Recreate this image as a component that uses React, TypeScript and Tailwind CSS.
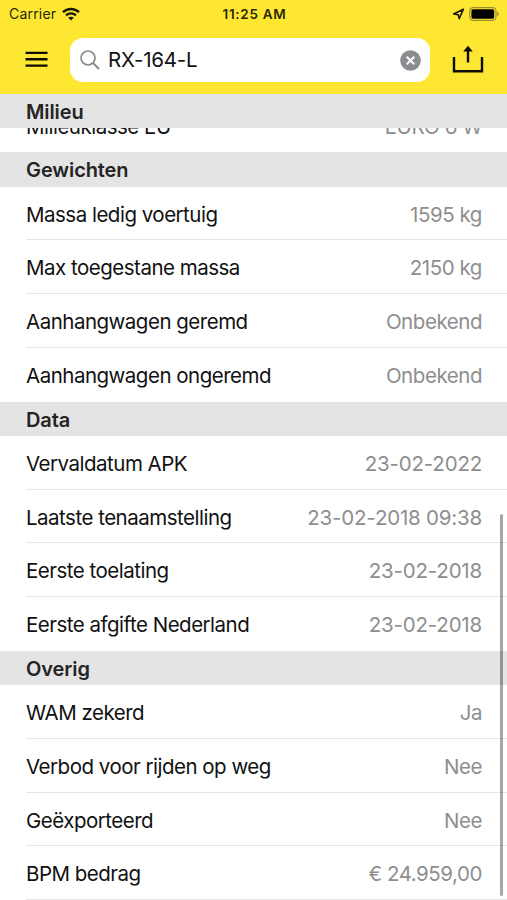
type Item = {
  label: string;
  value: string;
};

type Section = {
  title: string;
  items: Item[];
};

const sections: Section[] = [
  {
    title: "Gewichten",
    items: [
      { label: "Massa ledig voertuig", value: "1595 kg" },
      { label: "Max toegestane massa", value: "2150 kg" },
      { label: "Aanhangwagen geremd", value: "Onbekend" },
      { label: "Aanhangwagen ongeremd", value: "Onbekend" },
    ],
  },
  {
    title: "Data",
    items: [
      { label: "Vervaldatum APK", value: "23-02-2022" },
      { label: "Laatste tenaamstelling", value: "23-02-2018 09:38" },
      { label: "Eerste toelating", value: "23-02-2018" },
      { label: "Eerste afgifte Nederland", value: "23-02-2018" },
    ],
  },
  {
    title: "Overig",
    items: [
      { label: "WAM zekerd", value: "Ja" },
      { label: "Verbod voor rijden op weg", value: "Nee" },
      { label: "Geëxporteerd", value: "Nee" },
      { label: "BPM bedrag", value: "€ 24.959,00" },
    ],
  },
];

const StatusBar = () => {
  return (
    <div className="grid h-[27px] grid-cols-3 items-center pl-[9px] pr-[7px] text-[#2b2704]">
      <div className="flex items-center gap-[6px]">
        <span className="text-[14px] tracking-[0.2px]">Carrier</span>
        <svg width="18" height="14" viewBox="0 0 18 14" fill="none" stroke="#1c1a04">
          <path d="M1 5.1C5.5 0.8 12.5 0.8 17 5.1" strokeWidth="2.5" />
          <path d="M4 8.4C6.8 5.8 11.2 5.8 14 8.4" strokeWidth="2.3" />
          <path d="M9 13.6 6.2 10.8C7.8 9.4 10.2 9.4 11.8 10.8Z" fill="#1c1a04" stroke="none" />
        </svg>
      </div>
      <span className="pt-[1px] text-center text-[13.5px] font-semibold tracking-[0.7px]">11:25 AM</span>
      <div className="flex items-center justify-end gap-[4px]">
        <svg width="13" height="12" viewBox="0 0 13 12" fill="none" stroke="#1c1a04" strokeWidth="1.6" strokeLinejoin="round">
          <path d="M11.4 1.2 1.6 6 6.2 6.6 7.2 10.6Z" />
        </svg>
        <svg width="31" height="14" viewBox="0 0 31 14">
          <rect x="0.7" y="0.7" width="26.3" height="12.6" rx="3.6" fill="none" stroke="#9a8e2a" strokeWidth="1.2" />
          <rect x="2.4" y="2.3" width="22.8" height="9.4" rx="1.8" fill="#000" />
          <path d="M28.2 4.8C30.3 5.2 30.3 8.8 28.2 9.2Z" fill="#9a8e2a" />
        </svg>
      </div>
    </div>
  );
};

const SearchBar = () => {
  return (
    <div className="flex items-start pt-[11px]">
      <button className="ml-[25px] mt-[13px]">
        <svg width="23" height="17" viewBox="0 0 23 17" stroke="#0d0c02" strokeWidth="2.4">
          <path d="M0.5 1.9H22.5M0.5 8.3H22.5M0.5 14.6H22.5" />
        </svg>
      </button>
      <div className="ml-[22px] flex h-[44px] w-[360px] items-center rounded-[13px] bg-white pl-[10px] pr-[9px]">
        <svg width="20" height="20" viewBox="0 0 20 20" fill="none" stroke="#8a8a8e" strokeWidth="1.7">
          <circle cx="8" cy="8" r="7" />
          <path d="M13 13 19 19" strokeWidth="2" />
        </svg>
        <span className="ml-[8px] flex-1 pt-[1px] text-[20.5px] tracking-[-0.25px] text-[#111]">RX-164-L</span>
        <svg width="21" height="21" viewBox="0 0 21 21">
          <circle cx="10.5" cy="10.5" r="10.3" fill="#8b8b90" />
          <path d="M6.7 6.7 14.3 14.3M14.3 6.7 6.7 14.3" stroke="#fff" strokeWidth="2" />
        </svg>
      </div>
      <button className="ml-[22px] mt-[7px]">
        <svg width="32" height="28" viewBox="0 0 32 28" fill="none" stroke="#0d0c02">
          <path d="M2 12V26.3H30V12" strokeWidth="2.4" />
          <path d="M16 17.5V4" strokeWidth="2.4" />
          <path d="M11.2 6.6 16 0.8 20.8 6.6Z" fill="#0d0c02" stroke="none" />
        </svg>
      </button>
    </div>
  );
};

const SectionTitle = ({ title }: { title: string }) => {
  return (
    <h2 className="flex h-[34.2px] shrink-0 items-center bg-[#e4e4e4] pl-[26px] pt-[2px] text-[20px] font-semibold tracking-[-0.1px] text-[#242424]">
      {title}
    </h2>
  );
};

const Row = ({ label, value, divider = true }: Item & { divider?: boolean }) => {
  // dates are set a little wider than the other values
  const isDate = value.includes("-");
  return (
    <div
      className={`ml-[26px] flex h-[53.77px] shrink-0 items-center justify-between border-b pr-[25px] pt-[4px] text-[20.5px] ${
        divider ? "border-[#e6e6e6]" : "border-transparent"
      }`}
    >
      <span className="tracking-[-0.5px] text-[#111]">{label}</span>
      <span className={`text-[#8e8e8e] ${isDate ? "tracking-[-0.2px]" : "tracking-[-0.45px]"}`}>{value}</span>
    </div>
  );
};

const App = () => {
  return (
    <div className="relative flex h-[900px] w-[507px] flex-col overflow-hidden bg-white font-['Inter',sans-serif]">
      <header className="h-[94px] shrink-0 bg-[#fee733]">
        <StatusBar />
        <SearchBar />
      </header>
      <SectionTitle title="Milieu" />
      {/* Row that is scrolled partly under the sticky title */}
      <div className="flex h-[24.2px] shrink-0 flex-col justify-end overflow-hidden">
        <Row label="Milieuklasse EU" value="EURO 6 W" divider={false} />
      </div>
      {sections.map((section, s) => (
        <section key={section.title} className="shrink-0">
          <SectionTitle title={section.title} />
          {section.items.map((item, i) => (
            <Row
              key={item.label}
              {...item}
              divider={s === sections.length - 1 || i < section.items.length - 1}
            />
          ))}
        </section>
      ))}
      {/* Scroll indicator */}
      <div className="absolute right-[4px] top-[514px] h-[382px] w-[3.5px] rounded-full bg-black/35" />
    </div>
  );
};

export default App;
